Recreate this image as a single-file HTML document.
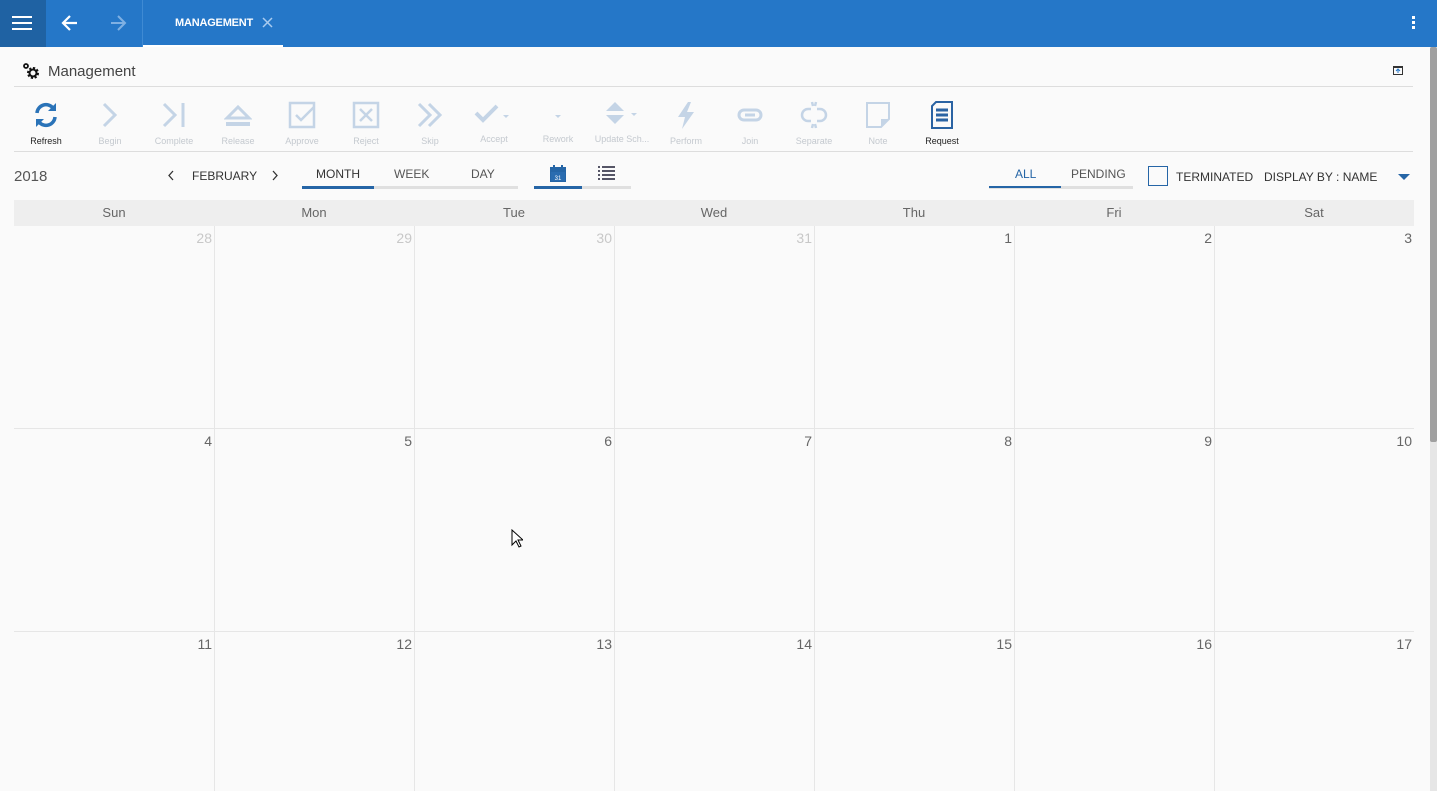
<!DOCTYPE html>
<html><head><meta charset="utf-8"><style>
*{box-sizing:border-box;margin:0;padding:0}
body{width:1437px;height:791px;overflow:hidden;background:#fafafa;font-family:"Liberation Sans",sans-serif;position:relative}
.top{position:absolute;left:0;top:0;width:1437px;height:47px;background:#2577c8}
.ham{position:absolute;left:0;top:0;width:46px;height:47px;background:#1f62a3}
.ham i{position:absolute;left:12px;width:20px;height:2px;background:#fff}
.tab{position:absolute;left:142px;top:0;width:140px;height:47px;border-left:1px solid #3f8ad3}
.tab span{position:absolute;left:32px;top:17px;color:#fff;font-size:11px;font-weight:bold;letter-spacing:-.2px}
.tab b{position:absolute;left:0;bottom:0;width:140px;height:2px;background:#fff}
.abs{position:absolute}
.tb{position:absolute;top:100px;width:64px;text-align:center;font-size:9px;color:#c4c9cf}
.tb svg{display:block;margin:0 auto 6px;height:30px}
.hl{position:absolute;height:1px;background:#ddd}
.txt{position:absolute;font-size:12px;color:#333}
.dh{position:absolute;top:200px;left:14px;width:1400px;height:26px;background:#eee}
.dh span{position:absolute;top:5px;width:200px;text-align:center;font-size:13px;color:#666}
.vl{position:absolute;top:226px;width:1px;height:565px;background:#e6e6e6}
.n{position:absolute;font-size:14px;color:#666;text-align:right;width:60px}
.g{color:#c8c8c8}
</style></head><body>
<div class="top">
<div class="ham"><i style="top:16px"></i><i style="top:22px"></i><i style="top:28px"></i></div>
<svg class="abs" style="left:60px;top:13px" width="20" height="20" viewBox="0 0 20 20"><path d="M17 10H4M10 3L3 10l7 7" stroke="#fff" stroke-width="2.2" fill="none"/></svg>
<svg class="abs" style="left:108px;top:13px" width="20" height="20" viewBox="0 0 20 20"><path d="M3 10h13M10 3l7 7-7 7" stroke="#7fb0e3" stroke-width="2" fill="none"/></svg>
<div class="tab"><span>MANAGEMENT</span><svg class="abs" style="left:119px;top:17px" width="11" height="11"><path d="M1 1l9 9M10 1l-9 9" stroke="#a9cbef" stroke-width="1.5"/></svg><b></b></div>
<div class="abs" style="left:1412px;top:16px;width:3px"><div style="height:3px;background:#fff;margin-bottom:2px"></div><div style="height:3px;background:#fff;margin-bottom:2px"></div><div style="height:3px;background:#fff"></div></div>
</div>
<div class="abs" style="left:1430px;top:47px;width:7px;height:744px;background:#e6e6e6"></div>
<div class="abs" style="left:1430px;top:47px;width:7px;height:395px;background:#a0a0a0;border-radius:2px"></div>

<svg class="abs" style="left:22px;top:62px" width="18" height="18" viewBox="0 0 18 18"><circle cx="11" cy="11" r="4.5" fill="none" stroke="#111" stroke-width="3" stroke-dasharray="2 1.5"/><circle cx="11" cy="11" r="3.5" fill="none" stroke="#111" stroke-width="2"/><circle cx="4" cy="4" r="2" fill="none" stroke="#111" stroke-width="1.8"/></svg>
<div class="txt" style="left:48px;top:63px;font-size:15px;color:#444">Management</div>
<svg class="abs" style="left:1393px;top:66px" width="10" height="9"><rect x=".5" y=".5" width="9" height="8" fill="none" stroke="#333"/><rect x="0" y="0" width="10" height="2" fill="#333"/><path d="M5 3v4M3 5l2-2 2 2" stroke="#2577c8" fill="none"/></svg>
<div class="hl" style="left:14px;top:86px;width:1399px"></div>

<div class="tb" style="left:14px;color:#222"><svg width="26" viewBox="0 0 26 30"><path d="M4 13a9 9 0 0 1 16-5M22 17a9 9 0 0 1-16 5" stroke="#2a73b8" stroke-width="3.5" fill="none"/><path d="M23 3v8h-8zM3 27v-8h8z" fill="#2a73b8"/></svg>Refresh</div>
<div class="tb" style="left:78px"><svg width="20" viewBox="0 0 20 30"><path d="M4 4l11 11-11 11" stroke="#c4d4e6" stroke-width="3" fill="none"/></svg>Begin</div>
<div class="tb" style="left:142px"><svg width="26" viewBox="0 0 26 30"><path d="M3 4l11 11-11 11M22 3v24" stroke="#c4d4e6" stroke-width="3" fill="none"/></svg>Complete</div>
<div class="tb" style="left:206px"><svg width="28" viewBox="0 0 28 30"><path d="M3 18l11-11 11 11z" stroke="#c4d4e6" stroke-width="3" fill="none"/><rect x="2" y="22" width="24" height="4" fill="#c4d4e6"/></svg>Release</div>
<div class="tb" style="left:270px"><svg width="28" viewBox="0 0 28 30"><rect x="2" y="3" width="24" height="24" stroke="#c4d4e6" stroke-width="2.5" fill="none"/><path d="M8 15l5 5 13-13" stroke="#c4d4e6" stroke-width="2.5" fill="none"/></svg>Approve</div>
<div class="tb" style="left:334px"><svg width="28" viewBox="0 0 28 30"><rect x="2" y="3" width="24" height="24" stroke="#c4d4e6" stroke-width="2.5" fill="none"/><path d="M8 9l12 12M20 9L8 21" stroke="#c4d4e6" stroke-width="2.5"/></svg>Reject</div>
<div class="tb" style="left:398px"><svg width="28" viewBox="0 0 28 30"><path d="M3 4l11 11-11 11M13 4l11 11-11 11" stroke="#c4d4e6" stroke-width="3" fill="none"/></svg>Skip</div>
<div class="tb" style="left:462px;top:98px"><svg width="44" viewBox="0 0 44 30"><path d="M4 15l7 7 14-14" stroke="#c4d4e6" stroke-width="4" fill="none"/><path d="M31 17h6l-3 3z" fill="#c4d4e6"/></svg>Accept</div>
<div class="tb" style="left:526px;top:98px"><svg width="20" viewBox="0 0 20 30"><path d="M7 17h6l-3 3z" fill="#c4d4e6"/></svg>Rework</div>
<div class="tb" style="left:590px;top:98px"><svg width="44" viewBox="0 0 44 30"><path d="M6 13l9-9 9 9zM6 17l9 9 9-9z" fill="#c4d4e6"/><path d="M31 15h6l-3 3z" fill="#c4d4e6"/></svg>Update Sch...</div>
<div class="tb" style="left:654px"><svg width="26" viewBox="0 0 26 30"><path d="M15 2L5 17h7l-3 12 12-17h-7l4-10z" fill="#c4d4e6"/></svg>Perform</div>
<div class="tb" style="left:718px"><svg width="28" viewBox="0 0 28 30"><rect x="3" y="10" width="22" height="10" rx="5" stroke="#c4d4e6" stroke-width="3" fill="none"/><path d="M9 15h10" stroke="#c4d4e6" stroke-width="3"/></svg>Join</div>
<div class="tb" style="left:782px"><svg width="28" viewBox="0 0 28 30"><path d="M11 9H8a6 6 0 0 0 0 12h3M17 9h3a6 6 0 0 1 0 12h-3M12 2l1 4M16 2l-1 4M12 28l1-4M16 28l-1-4" stroke="#c4d4e6" stroke-width="2.5" fill="none"/></svg>Separate</div>
<div class="tb" style="left:846px"><svg width="28" viewBox="0 0 28 30"><path d="M3 3h22v16l-8 8H3z" stroke="#c4d4e6" stroke-width="2" fill="none"/><path d="M17 27v-8h8z" fill="#c4d4e6"/></svg>Note</div>
<div class="tb" style="left:910px;color:#222"><svg width="26" viewBox="0 0 26 30"><path d="M7 2h16v26H3V6z" stroke="#2a63a3" stroke-width="2" fill="none"/><path d="M7 10h12M7 15h12M7 20h12" stroke="#2a63a3" stroke-width="3"/></svg>Request</div>
<div class="hl" style="left:14px;top:151px;width:1399px"></div>

<div class="txt" style="left:14px;top:168px;font-size:15px;color:#555">2018</div>
<svg class="abs" style="left:167px;top:170px" width="8" height="11"><path d="M6 1L2 5.5 6 10" stroke="#333" stroke-width="1.3" fill="none"/></svg>
<div class="txt" style="left:192px;top:169px">FEBRUARY</div>
<svg class="abs" style="left:271px;top:170px" width="8" height="11"><path d="M2 1l4 4.5L2 10" stroke="#333" stroke-width="1.3" fill="none"/></svg>
<div class="abs" style="left:302px;top:186px;width:216px;height:3px;background:#e0e0e0"></div>
<div class="abs" style="left:302px;top:186px;width:72px;height:3px;background:#2565a6"></div>
<div class="txt" style="left:316px;top:167px">MONTH</div>
<div class="txt" style="left:394px;top:167px;color:#555">WEEK</div>
<div class="txt" style="left:471px;top:167px;color:#555">DAY</div>
<div class="abs" style="left:534px;top:186px;width:97px;height:3px;background:#e0e0e0"></div>
<div class="abs" style="left:534px;top:186px;width:48px;height:3px;background:#2565a6"></div>
<svg class="abs" style="left:549px;top:164px" width="18" height="18"><rect x="1" y="3" width="16" height="15" fill="#2565a6"/><rect x="2" y="8" width="14" height="9" fill="#2a6cb0"/><rect x="4" y="1" width="2" height="4" fill="#2565a6"/><rect x="12" y="1" width="2" height="4" fill="#2565a6"/><text x="9" y="16" font-size="6" fill="#fff" text-anchor="middle" font-family="Liberation Sans">31</text></svg>
<svg class="abs" style="left:598px;top:166px" width="18" height="14"><g fill="#556"><rect x="0" y="0" width="2" height="2"/><rect x="0" y="4" width="2" height="2"/><rect x="0" y="8" width="2" height="2"/><rect x="0" y="12" width="2" height="2"/><rect x="4" y="0" width="13" height="2"/><rect x="4" y="4" width="13" height="2"/><rect x="4" y="8" width="13" height="2"/><rect x="4" y="12" width="13" height="2"/></g></svg>

<div class="abs" style="left:989px;top:186px;width:144px;height:3px;background:#e0e0e0"></div>
<div class="abs" style="left:989px;top:186px;width:72px;height:2px;background:#2565a6"></div>
<div class="txt" style="left:1015px;top:167px;color:#2565a6">ALL</div>
<div class="txt" style="left:1071px;top:167px;color:#555">PENDING</div>
<div class="abs" style="left:1148px;top:166px;width:20px;height:20px;border:1px solid #2565a6"></div>
<div class="txt" style="left:1176px;top:170px">TERMINATED</div>
<div class="txt" style="left:1264px;top:170px">DISPLAY BY : NAME</div>
<svg class="abs" style="left:1398px;top:174px" width="12" height="6"><path d="M0 0h12L6 6z" fill="#2565a6"/></svg>

<div class="dh"><span style="left:0">Sun</span><span style="left:200px">Mon</span><span style="left:400px">Tue</span><span style="left:600px">Wed</span><span style="left:800px">Thu</span><span style="left:1000px">Fri</span><span style="left:1200px">Sat</span></div>
<div class="vl" style="left:214px"></div><div class="vl" style="left:414px"></div><div class="vl" style="left:614px"></div><div class="vl" style="left:814px"></div><div class="vl" style="left:1014px"></div><div class="vl" style="left:1214px"></div>
<div class="hl" style="left:14px;top:428px;width:1400px;background:#e6e6e6"></div>
<div class="hl" style="left:14px;top:631px;width:1400px;background:#e6e6e6"></div>

<div class="n g" style="left:152px;top:230px">28</div><div class="n g" style="left:352px;top:230px">29</div><div class="n g" style="left:552px;top:230px">30</div><div class="n g" style="left:752px;top:230px">31</div><div class="n" style="left:952px;top:230px">1</div><div class="n" style="left:1152px;top:230px">2</div><div class="n" style="left:1352px;top:230px">3</div>
<div class="n" style="left:152px;top:433px">4</div><div class="n" style="left:352px;top:433px">5</div><div class="n" style="left:552px;top:433px">6</div><div class="n" style="left:752px;top:433px">7</div><div class="n" style="left:952px;top:433px">8</div><div class="n" style="left:1152px;top:433px">9</div><div class="n" style="left:1352px;top:433px">10</div>
<div class="n" style="left:152px;top:636px">11</div><div class="n" style="left:352px;top:636px">12</div><div class="n" style="left:552px;top:636px">13</div><div class="n" style="left:752px;top:636px">14</div><div class="n" style="left:952px;top:636px">15</div><div class="n" style="left:1152px;top:636px">16</div><div class="n" style="left:1352px;top:636px">17</div>
<svg class="abs" style="left:511px;top:529px" width="12" height="19"><path d="M1 1v15l4-4 3 6 2-1-3-6h5z" fill="#fff" stroke="#000"/></svg>
</body></html>
